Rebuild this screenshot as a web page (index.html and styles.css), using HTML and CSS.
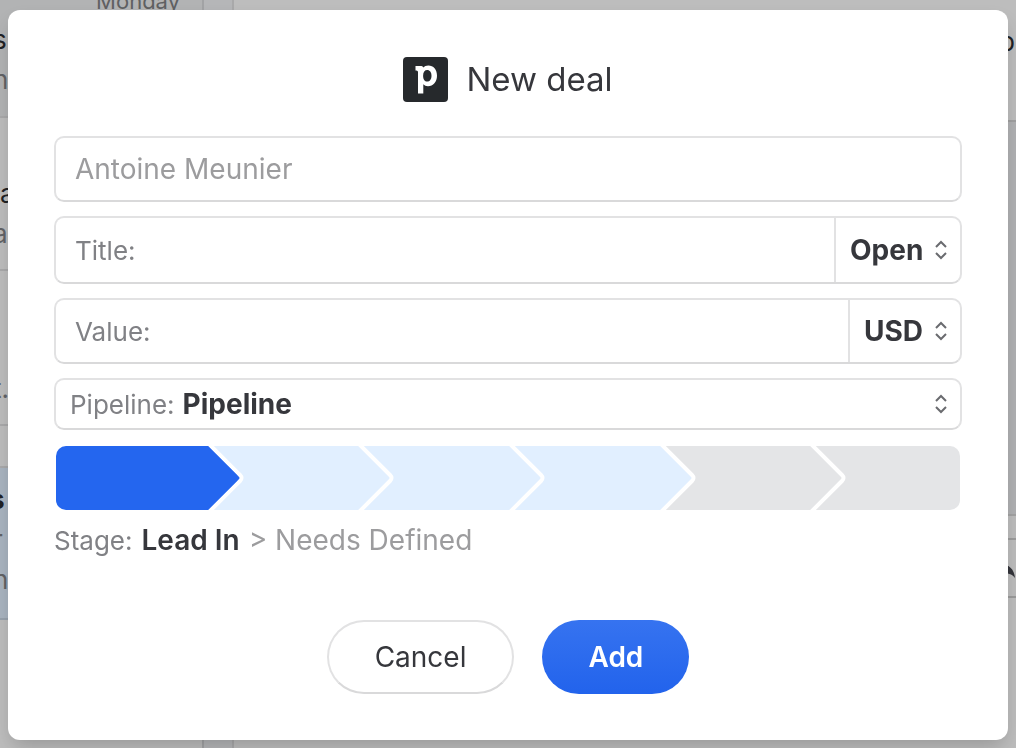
FILE: index.html
```html
<!DOCTYPE html>
<html lang="en">
<head>
  <meta charset="UTF-8" />
  <meta name="viewport" content="width=device-width, initial-scale=1.0" />
  <title>New deal</title>
  <link rel="stylesheet" href="styles.css">
</head>
<body>
  <!-- inbox behind the dialog -->
  <div class="inbox" aria-hidden="true">
    <div class="mail-list">
      <div class="mail mail-first">
        <span class="mail-date">Monday</span>
        <span class="mail-name">s</span>
        <span class="mail-text">n</span>
      </div>
      <div class="mail mail-second">
        <span class="mail-name">a</span>
        <span class="mail-text">a</span>
      </div>
      <div class="mail mail-third">
        <span class="mail-text">t.</span>
      </div>
      <div class="mail-gap"></div>
      <div class="mail mail-selected">
        <span class="mail-name">s</span>
        <span class="mail-text">r</span>
        <span class="mail-text">n</span>
      </div>
    </div>
    <div class="gutter"></div>
    <div class="thread">
      <div class="thread-head">p</div>
      <div class="thread-body"></div>
      <div class="thread-gap"></div>
      <div class="thread-reply">
        <svg width="26" height="24" viewBox="0 0 26 24"><path d="M0 9L10 0v4c9 0 14 5 15 14C21 13 17 13 10 13v6z" fill="#33343a"/></svg>
      </div>
    </div>
  </div>

  <div class="overlay">
    <form class="dialog" role="dialog" aria-labelledby="dialogTitle">
      <header class="dialog-header">
        <svg class="logo" width="45" height="45" viewBox="0 0 45 45" aria-hidden="true">
          <rect width="45" height="45" rx="4" fill="#26292c"/>
          <path fill="#fff" fill-rule="evenodd" d="M12.5 9H18.5Q20 9 20.2 10.5Q22 8.5 25.3 8.5C30.5 8.5 34 12.6 34 18.7C34 25 30.2 29.2 25 29.2Q22 29.2 20.3 27.2V36.5H15V15Q15 13.5 13.5 13.5H12.5ZM24.2 13C21.8 13 20.1 15 20.1 18.8C20.1 22.5 21.8 24.6 24.1 24.6C26.8 24.6 28.5 22.3 28.5 18.8C28.5 15.2 26.8 13 24.2 13Z"/>
        </svg>
        <h1 id="dialogTitle">New deal</h1>
      </header>

      <div class="field">
        <input class="field-input" type="text" placeholder="Antoine Meunier" aria-label="Contact">
      </div>

      <div class="field field-tall">
        <label class="field-label" for="title">Title:</label>
        <input class="field-input" id="title" type="text">
        <div class="picker picker-side">
          <select aria-label="Status"><option>Open</option></select>
          <svg class="arrows" width="14" height="20" viewBox="0 0 14 20"><path d="M2 7l5-5 5 5M2 13l5 5 5-5"/></svg>
        </div>
      </div>

      <div class="field">
        <label class="field-label" for="value">Value:</label>
        <input class="field-input" id="value" type="text">
        <div class="picker picker-side">
          <select aria-label="Currency"><option>USD</option></select>
          <svg class="arrows" width="14" height="20" viewBox="0 0 14 20"><path d="M2 7l5-5 5 5M2 13l5 5 5-5"/></svg>
        </div>
      </div>

      <div class="field field-short">
        <label class="field-label" for="pipeline">Pipeline:</label>
        <div class="picker picker-wide">
          <select id="pipeline"><option>Pipeline</option></select>
          <svg class="arrows" width="14" height="20" viewBox="0 0 14 20"><path d="M2 7l5-5 5 5M2 13l5 5 5-5"/></svg>
        </div>
      </div>

      <div class="stages">
        <button type="button" class="stage current" aria-label="Lead In"></button>
        <button type="button" class="stage next" aria-label="Needs Defined"><svg class="chevron" width="40" height="64" viewBox="0 0 40 64"><path class="fill" d="M0 0H2L33 29Q36 32 33 35L2 64H0z"/><path class="line" d="M1 -3L33 29Q36 32 33 35L1 67"/></svg></button>
        <button type="button" class="stage next" aria-label="Stage 3"><svg class="chevron" width="40" height="64" viewBox="0 0 40 64"><path class="line" d="M1 -3L33 29Q36 32 33 35L1 67"/></svg></button>
        <button type="button" class="stage next" aria-label="Stage 4"><svg class="chevron" width="40" height="64" viewBox="0 0 40 64"><path class="line" d="M1 -3L33 29Q36 32 33 35L1 67"/></svg></button>
        <button type="button" class="stage later" aria-label="Stage 5"><svg class="chevron" width="40" height="64" viewBox="0 0 40 64"><path class="fill" d="M0 0H2L33 29Q36 32 33 35L2 64H0z"/><path class="line" d="M1 -3L33 29Q36 32 33 35L1 67"/></svg></button>
        <button type="button" class="stage later" aria-label="Stage 6"><svg class="chevron" width="40" height="64" viewBox="0 0 40 64"><path class="line" d="M1 -3L33 29Q36 32 33 35L1 67"/></svg></button>
      </div>
      <p class="stage-text">
        <span class="stage-label">Stage:</span>
        <strong>Lead In</strong>
        <span>&gt; Needs Defined</span>
      </p>

      <div class="actions">
        <button type="button" class="btn">Cancel</button>
        <button type="submit" class="btn btn-primary">Add</button>
      </div>
    </form>
  </div>
</body>
</html>
```
FILE: styles.css
```css
* {
  box-sizing: border-box;
}

body {
  margin: 0;
  min-height: 100vh;
  font-family: Inter, "Liberation Sans", sans-serif;
  font-size: 28px;
  color: #36373c;
  background: #bdbdbd;
  overflow: hidden;
}

/* inbox */
.inbox {
  display: flex;
  height: 100vh;
}

.mail-list {
  width: 204px;
  flex: none;
  border-right: 2px solid #a2a3a5;
  overflow: hidden;
}

.mail {
  display: flex;
  flex-direction: column;
  border-bottom: 2px solid #a9a9aa;
  overflow: hidden;
}

.mail-first {
  height: 118px;
  background: #b2b3b4;
}

.mail-second {
  height: 153px;
  padding-top: 56px;
}

.mail-third {
  height: 155px;
  padding-top: 98px;
}

.mail-gap {
  height: 42px;
  border-bottom: 2px solid #a9a9aa;
}

.mail-selected {
  height: 152px;
  padding-top: 12px;
  background: #a9b4c0;
  border-color: #98a2ad;
}

.mail-date {
  margin-right: 22px;
  height: 20px;
  line-height: 2px;
  font-size: 22px;
  text-align: right;
  color: #5f6062;
}

.mail-name,
.mail-text {
  font-size: 26px;
  line-height: 40px;
  text-indent: -7px;
}

.mail-name {
  color: #202124;
}

.mail-text {
  color: #626366;
}

.mail-second .mail-name {
  text-indent: 0;
}

.mail-selected .mail-name {
  font-weight: 700;
  text-indent: -10px;
}

.gutter {
  width: 30px;
  flex: none;
  background: #b5b6b8;
  border-right: 2px solid #a9a9aa;
}

.thread {
  flex: 1;
}

.thread-head {
  height: 122px;
  padding: 22px 1px 0 0;
  font-size: 26px;
  line-height: 40px;
  text-align: right;
  color: #202124;
  border-bottom: 2px solid #a0a0a1;
}

.thread-body {
  height: 394px;
  background: #b0b1b3;
  border-bottom: 2px solid #a3a3a3;
}

.thread-gap {
  height: 24px;
  border-bottom: 2px solid #9c9c9c;
}

.thread-reply {
  height: 58px;
  padding-top: 20px;
  text-align: right;
  font-size: 0;
  border-bottom: 2px solid #9b9b9b;
}

/* dialog */
.overlay {
  position: fixed;
  inset: 0;
  padding: 10px 8px 8px;
}

.dialog {
  min-height: 100%;
  padding: 46px;
  background: #fff;
  border-radius: 12px;
  box-shadow: 0 10px 20px -4px rgba(0, 0, 0, 0.2);
}

.dialog-header {
  display: flex;
  justify-content: center;
  align-items: center;
  gap: 18px;
  height: 46px;
  margin-bottom: 34px;
}

.logo {
  display: block;
}

h1 {
  margin: 0;
  font-size: 33px;
  line-height: 44px;
  font-weight: 400;
}

.field {
  display: flex;
  align-items: center;
  height: 66px;
  margin-bottom: 14px;
  padding-left: 19px;
  border: 2px solid #e2e2e3;
  border-bottom-color: #d9d9da;
  border-radius: 10px;
}

.field-tall {
  height: 68px;
}

.field-short {
  height: 52px;
  padding-left: 14px;
}

.field-label {
  font-size: 26px;
  color: #808185;
}

.field-input {
  flex: 1;
  min-width: 0;
  height: 100%;
  padding: 0;
  border: 0;
  outline: 0;
  background: none;
  font: inherit;
  color: inherit;
}

.field-input::placeholder {
  color: #9c9c9e;
}

.picker {
  display: flex;
  align-items: center;
  height: 100%;
  padding-right: 12px;
}

.picker-side {
  gap: 10px;
  padding-left: 14px;
  border-left: 2px solid #e2e2e3;
}

.picker-wide {
  flex: 1;
  padding-left: 8px;
}

.picker-wide select {
  flex: 1;
}

.picker select {
  padding: 0;
  border: 0;
  outline: 0;
  appearance: none;
  background: none;
  font: inherit;
  font-weight: 700;
  color: inherit;
}

.arrows {
  flex: none;
  fill: none;
  stroke: #6a6b6f;
  stroke-width: 2;
  pointer-events: none;
}

.stages {
  display: flex;
  height: 64px;
  margin: 16px 2px 0;
  border-radius: 10px;
  overflow: hidden;
}

.stage {
  position: relative;
  flex: 1;
  padding: 0;
  border: 0;
}

.current {
  background: #2466ef;
}

.next {
  background: #e1efff;
}

.later {
  background: #e4e5e7;
}

/* arrow of the stage before, laid over the start of this one */
.chevron {
  position: absolute;
  top: 0;
  left: 0;
}

.chevron .line {
  fill: none;
  stroke: #fff;
  stroke-width: 4;
}

.chevron .fill {
  fill: #2466ef;
}

.later .fill {
  fill: #e1efff;
}

.stage-text {
  display: flex;
  align-items: center;
  gap: 9px;
  height: 40px;
  margin: 10px 0 60px;
  color: #9c9c9e;
}

.stage-label {
  font-size: 26px;
  color: #808185;
}

.stage-text strong {
  font-weight: 600;
  color: #36373c;
}

.actions {
  display: flex;
  justify-content: center;
  gap: 28px;
}

.btn {
  height: 74px;
  padding: 0 46px;
  border: 2px solid #e2e2e3;
  border-bottom-color: #d9d9da;
  border-radius: 37px;
  background: #fff;
  font: inherit;
  color: #36373c;
  cursor: pointer;
}

.btn-primary {
  border: 0;
  background: linear-gradient(#3673f0, #2263ec);
  font-weight: 600;
  color: #fff;
}
```
